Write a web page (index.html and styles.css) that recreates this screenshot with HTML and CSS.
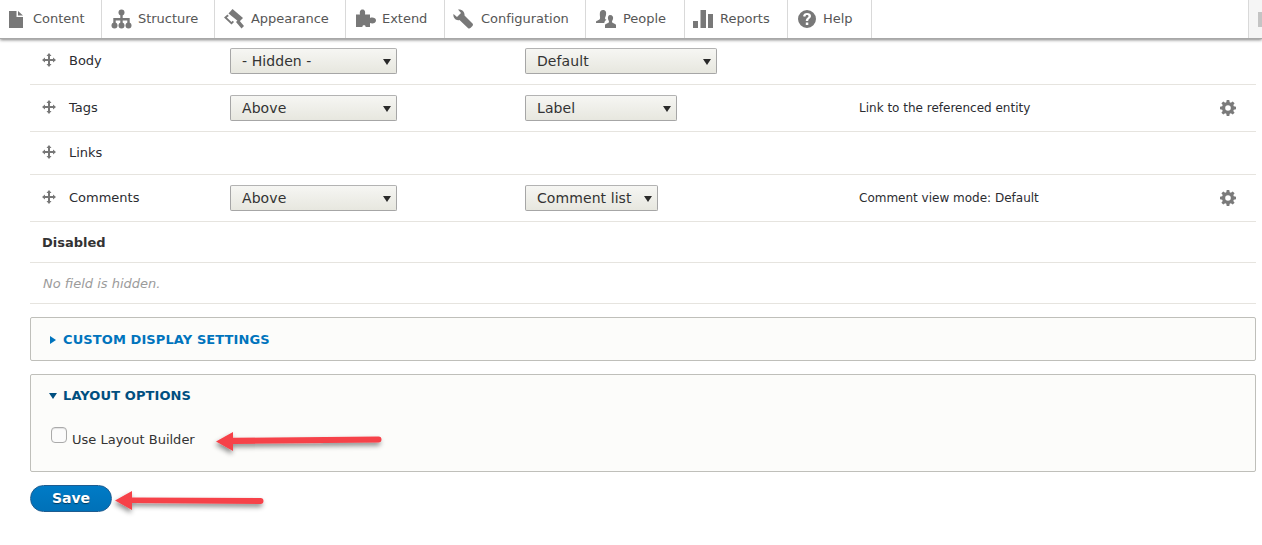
FILE: index.html
```html
<!DOCTYPE html>
<html lang="en">
<head>
<meta charset="utf-8">
<title>Manage display</title>
<link rel="stylesheet" href="styles.css">
</head>
<body>
<nav class="toolbar">
  <a class="tab tab-content"><svg class="ico" viewBox="0 0 14 17"><path d="M0 0h7.500v6H14v11H0z"/><path d="M9 0l5 4.600H9z"/></svg>Content</a>
  <a class="tab tab-structure"><svg class="ico ico-w" viewBox="0 0 20 20"><circle cx="10" cy="3.500" r="3"/><path d="M8.800 5h2.400v4h7v6h-2.400v-3.600h-4.600V15H8.800v-3.600H4.200V15H1.800V9h7z"/><circle cx="3" cy="16.500" r="3"/><circle cx="10" cy="16.500" r="3"/><circle cx="17" cy="16.500" r="3"/></svg>Structure</a>
  <a class="tab tab-appearance"><svg class="ico ico-w" viewBox="0 0 20 20"><path d="M8.500 0L19 9l-4 4L4.500 4.500z"/><path d="M3.500 5.500L0 8.500l7.500 7 2.500-2.500-1.300-1.200-1.200 1.100L2.800 8.600l2-1.700z"/><path d="M12 13l2.500-2.500L20 17l-2.500 2.500z"/></svg>Appearance</a>
  <a class="tab tab-extend"><svg class="ico ico-w" viewBox="0 0 20 20"><path d="M0 5.500h4C3.500 3 4 .5 6.500.5S9.500 3 9 5.500h5V9c2-1 6-.5 6 2.500S16 15 14 14v4H9.500c1-2.500-4-2.500-3 0H0z"/></svg>Extend</a>
  <a class="tab tab-config"><svg class="ico ico-w" viewBox="0 0 20 20"><path d="M5 .5C8.500-.2 12 2.500 11.500 6.500l8 8c.8.9.5 2-.3 2.800l-1.500 1.500c-.8.8-1.900 1-2.800.2l-8.400-8C2.500 12-.2 8.500.5 5L4 8l4-4z"/></svg>Configuration</a>
  <a class="tab tab-people"><svg class="ico ico-w" viewBox="0 0 20 20"><path d="M7 1c3 0 3.500 2.500 3 5-.3 1.500-1 2.500-1 3.500.3 1 1 1 1.500 1.300-1 .5-2 1.500-2.200 3.200H0v-1c0-1.500 3.500-1.500 4-3.500C4.300 8.500 3.800 7 3.800 5 3.800 2.500 5 1 7 1z"/><path d="M14 6c2.500 0 3.500 2 3 4-.3 1.200-1 2-1 3 .2 1.300 3.500 1.500 4 3v3H9v-3c.5-1.500 3.800-1.700 4-3 0-1-.7-1.800-1-3-.5-2 .5-4 2-4z"/></svg>People</a>
  <a class="tab tab-reports"><svg class="ico ico-w" viewBox="0 0 20 20"><path d="M0 12h5v7H0zM7.500 1H13v18H7.500zM15 5h5v14h-5z"/></svg>Reports</a>
  <a class="tab tab-help"><svg class="ico ico-w" viewBox="0 0 20 20"><path fill-rule="evenodd" d="M10 1a9 9 0 1 1 0 18 9 9 0 0 1 0-18zM8.800 13.500v2.500h2.500v-2.500zM10 4C7.800 4 6.300 5.200 6 7.300l2.300.4C8.500 6.600 9 6 10 6c.9 0 1.500.5 1.500 1.300 0 1.500-2.700 1.700-2.700 4.700h2.400c0-2.200 2.800-2.400 2.800-4.900C14 5.300 12.400 4 10 4z"/></svg>Help</a>
  <div class="toolbar-fill"></div>
  <div class="toolbar-end"><span class="end-mark"></span></div>
</nav>

<main class="page">
  <div class="fields">
    <div class="row row-first">
      <span class="handle"><svg viewBox="0 0 14 14"><path d="M7 0l2.500 3H8v3h3V4.500L14 7l-3 2.500V8H8v3h1.500L7 14l-2.500-3H6V8H3v1.500L0 7l3-2.500V6h3V3H4.500z"/></svg></span>
      <span class="name">Body</span>
      <span class="sel1"><span class="select w167">- Hidden -</span></span>
      <span class="sel2"><span class="select w192">Default</span></span>
    </div>
    <div class="row row-tall">
      <span class="handle"><svg viewBox="0 0 14 14"><path d="M7 0l2.500 3H8v3h3V4.500L14 7l-3 2.500V8H8v3h1.500L7 14l-2.500-3H6V8H3v1.500L0 7l3-2.500V6h3V3H4.500z"/></svg></span>
      <span class="name">Tags</span>
      <span class="sel1"><span class="select w167">Above</span></span>
      <span class="sel2"><span class="select w152">Label</span></span>
      <span class="summary">Link to the referenced entity</span>
      <span class="gear"><svg viewBox="0 0 16 16"><path fill-rule="evenodd" d="M6.700 0h2.600l.4 2.200 1.200.5L12.700 1.400l1.900 1.900-1.300 1.800.5 1.200 2.200.4v2.600l-2.200.4-.5 1.200 1.300 1.800-1.900 1.900-1.800-1.300-1.200.5-.4 2.200H6.700l-.4-2.200-1.200-.5-1.800 1.300-1.900-1.900 1.300-1.800-.5-1.200L0 9.300V6.700l2.200-.4.500-1.200L1.400 3.300l1.900-1.900 1.800 1.300 1.200-.5zM8 5.200a2.800 2.800 0 1 0 0 5.600 2.800 2.800 0 0 0 0-5.600z"/></svg></span>
    </div>
    <div class="row row-short">
      <span class="handle"><svg viewBox="0 0 14 14"><path d="M7 0l2.500 3H8v3h3V4.500L14 7l-3 2.500V8H8v3h1.500L7 14l-2.500-3H6V8H3v1.500L0 7l3-2.500V6h3V3H4.500z"/></svg></span>
      <span class="name">Links</span>
    </div>
    <div class="row row-tall">
      <span class="handle"><svg viewBox="0 0 14 14"><path d="M7 0l2.500 3H8v3h3V4.500L14 7l-3 2.500V8H8v3h1.500L7 14l-2.500-3H6V8H3v1.500L0 7l3-2.500V6h3V3H4.500z"/></svg></span>
      <span class="name">Comments</span>
      <span class="sel1"><span class="select w167">Above</span></span>
      <span class="sel2"><span class="select w133">Comment list</span></span>
      <span class="summary">Comment view mode: Default</span>
      <span class="gear"><svg viewBox="0 0 16 16"><path fill-rule="evenodd" d="M6.700 0h2.600l.4 2.200 1.200.5L12.700 1.400l1.900 1.900-1.300 1.800.5 1.200 2.200.4v2.600l-2.200.4-.5 1.200 1.300 1.800-1.900 1.900-1.800-1.300-1.200.5-.4 2.200H6.700l-.4-2.200-1.200-.5-1.800 1.300-1.900-1.900 1.300-1.800-.5-1.200L0 9.300V6.700l2.200-.4.500-1.200L1.400 3.300l1.900-1.900 1.800 1.300 1.200-.5zM8 5.200a2.800 2.800 0 1 0 0 5.600 2.800 2.800 0 0 0 0-5.600z"/></svg></span>
    </div>
    <div class="row-plain row-disabled">Disabled</div>
    <div class="row-plain row-empty">No field is hidden.</div>
  </div>

  <section class="panel panel-closed">
    <div class="panel-title title-link"><span class="tri tri-right"></span>CUSTOM DISPLAY SETTINGS</div>
  </section>

  <section class="panel panel-open">
    <div class="panel-title title-active"><span class="tri tri-down"></span>LAYOUT OPTIONS</div>
    <label class="check"><span class="box"></span><span class="check-text">Use Layout Builder</span></label>
  </section>

  <button class="save" type="button">Save</button>
</main>

<svg class="arrows" viewBox="0 0 1262 545" aria-hidden="true">
  <defs>
    <filter id="sh" x="-10%" y="-60%" width="120%" height="260%"><feDropShadow dx="-1" dy="3" stdDeviation="2.500" flood-color="#000" flood-opacity=".45"/></filter>
  </defs>
  <path filter="url(#sh)" fill="#f6424a" d="M216 441.500l17-9.500v5.800l145.500-1.300a3 3 0 0 1 0 6L233 444v7z"/>
  <path filter="url(#sh)" fill="#f6424a" d="M115 500.500l17-9.500v6.500l128.500.5a3 3 0 0 1 0 6L132 503v7z"/>
</svg>
</body>
</html>
```
FILE: styles.css
```css
* { box-sizing: border-box; }
html, body { margin: 0; padding: 0; }
body {
  position: relative;
  width: 1262px;
  height: 545px;
  overflow: hidden;
  background: #fff;
  color: #2b2c31;
  font: 13px/18px "DejaVu Sans", sans-serif;
}

/* toolbar */
.toolbar {
  display: flex;
  height: 39px;
  background: #fff;
  box-shadow: 0 1px 3px 0 rgba(0,0,0,.5);
  border-bottom: 1px solid #a8a8a8;
  position: relative;
}
.tab {
  display: flex;
  align-items: center;
  height: 38px;
  border-right: 1px solid #d9d9d9;
  color: #565656;
  font-size: 13px;
  letter-spacing: -.03px;
}
.tab-content { width: 102px; padding-left: 9px; }
.tab-structure { width: 113px; padding-left: 9px; }
.tab-structure .ico { width: 21px; margin-right: 6px; }
.tab-appearance { width: 131px; padding-left: 9px; }
.tab-appearance .ico { margin-right: 7px; }
.tab-extend { width: 99px; padding-left: 10px; }
.tab-extend .ico { margin-right: 6px; }
.tab-config { width: 141px; padding-left: 8px; }
.tab-people { width: 99px; padding-left: 10px; }
.tab-people .ico { margin-right: 7px; }
.tab-reports { width: 103px; padding-left: 8px; }
.tab-reports .ico { margin-right: 7px; }
.tab-help { width: 84px; padding-left: 9px; }
.tab-help .ico { margin-right: 6px; }
.ico { width: 14px; height: 17px; margin-right: 10px; fill: #787878; flex: none; }
.ico-w { width: 20px; height: 20px; margin-right: 8px; }
.toolbar-fill { width: 377px; height: 38px; border-right: 1px solid #d9d9d9; }
.toolbar-end { flex: 1; height: 38px; background: #f5f5f5; padding: 12px 0 0 9px; }
.end-mark { display: block; width: 4px; height: 15px; background: #c4c4c4; }

/* fields table */
.page { padding: 0 6px 0 30px; }
.row {
  display: grid;
  grid-template-columns: 39px 161px 295px 334px 1fr;
  align-items: center;
  border-bottom: 1px solid #e6e4df;
}
.row-first { height: 46px; padding-bottom: 2px; }
.row-tall { height: 47px; }
.row-short { height: 43px; }
.handle { display: flex; padding-left: 12px; }
.handle svg { width: 14px; height: 14px; fill: #777; margin-top: -2px; }
.name { grid-column: 2; }
.sel1 { grid-column: 3; display: flex; }
.sel2 { grid-column: 4; display: flex; }
.summary { grid-column: 5; font-size: 12px; display: block; }
.gear { display: flex; }
.row-tall { grid-template-columns: 39px 161px 295px 334px 361px 16px; }
.gear svg { width: 16px; height: 16px; fill: #7a7a7a; }

.select {
  display: block;
  position: relative;
  height: 26px;
  padding-left: 11px;
  border: 1px solid #a6a6a6;
  border-top-color: #b3b3b3;
  border-radius: 2px;
  background: linear-gradient(#f6f6f3, #e7e7df);
  color: #333;
  font-size: 14px;
  letter-spacing: .08px;
  line-height: 24px;
}
.select::after {
  content: "";
  position: absolute;
  right: 5px;
  top: 10px;
  border: 4px solid transparent;
  border-top: 6px solid #2a2a2a;
  border-bottom: 0;
}
.w167 { width: 167px; }
.w192 { width: 192px; }
.w152 { width: 152px; }
.w133 { width: 133px; }

.row-plain { border-bottom: 1px solid #e6e4df; padding-left: 12px; }
.row-disabled { height: 41px; padding-top: 12px; font-weight: 700; color: #333; }
.row-empty { height: 41px; padding-top: 12px; padding-left: 13px; color: #9b9b9b; font-style: italic; }

/* panels */
.panel {
  background: #fcfcfa;
  border: 1px solid #bfbfba;
  border-radius: 2px;
}
.panel-closed { height: 44px; margin-top: 13px; }
.panel-open { height: 98px; margin-top: 13px; }
.panel-title {
  display: flex;
  align-items: center;
  height: 42px;
  padding-left: 18px;
  padding-top: 2px;
  font-size: 13px;
  font-weight: 700;
  letter-spacing: .1px;
}
.panel-open .panel-title { height: 41px; padding-top: 0; }
.title-link { color: #0074bd; }
.title-active { color: #004f80; }
.tri { width: 0; height: 0; margin-right: 8px; border-style: solid; border-color: transparent; }
.tri-right { border-width: 4px 0 4px 6px; border-left-color: #0074bd; margin-left: 1px; margin-right: 7px; }
.tri-down { border-width: 6px 4px 0; border-top-color: #004f80; margin-right: 6px; }
.check {
  display: flex;
  align-items: flex-start;
  margin: 11px 0 0 20px;
  color: #333;
  line-height: 18px;
}
.check-text { padding-top: 4px; }
.box {
  width: 16px;
  height: 16px;
  margin-right: 5px;
  border: 1px solid #aaa;
  border-radius: 4px;
  background: #fbfbfb;
  box-shadow: inset 0 1px 1px rgba(0,0,0,.1);
}
.save {
  display: block;
  width: 82px;
  height: 27px;
  margin: 13px 0 0;
  padding: 0 0 2px;
  border: 1px solid #1e5c90;
  border-radius: 20px;
  background: linear-gradient(#007bc6, #0071b8);
  color: #fff;
  font: 700 14px/18px "DejaVu Sans", sans-serif;
  text-shadow: 0 1px 1px rgba(0,0,0,.5);
}

.arrows {
  position: absolute;
  left: 0;
  top: 0;
  width: 1262px;
  height: 545px;
  pointer-events: none;
}
```
